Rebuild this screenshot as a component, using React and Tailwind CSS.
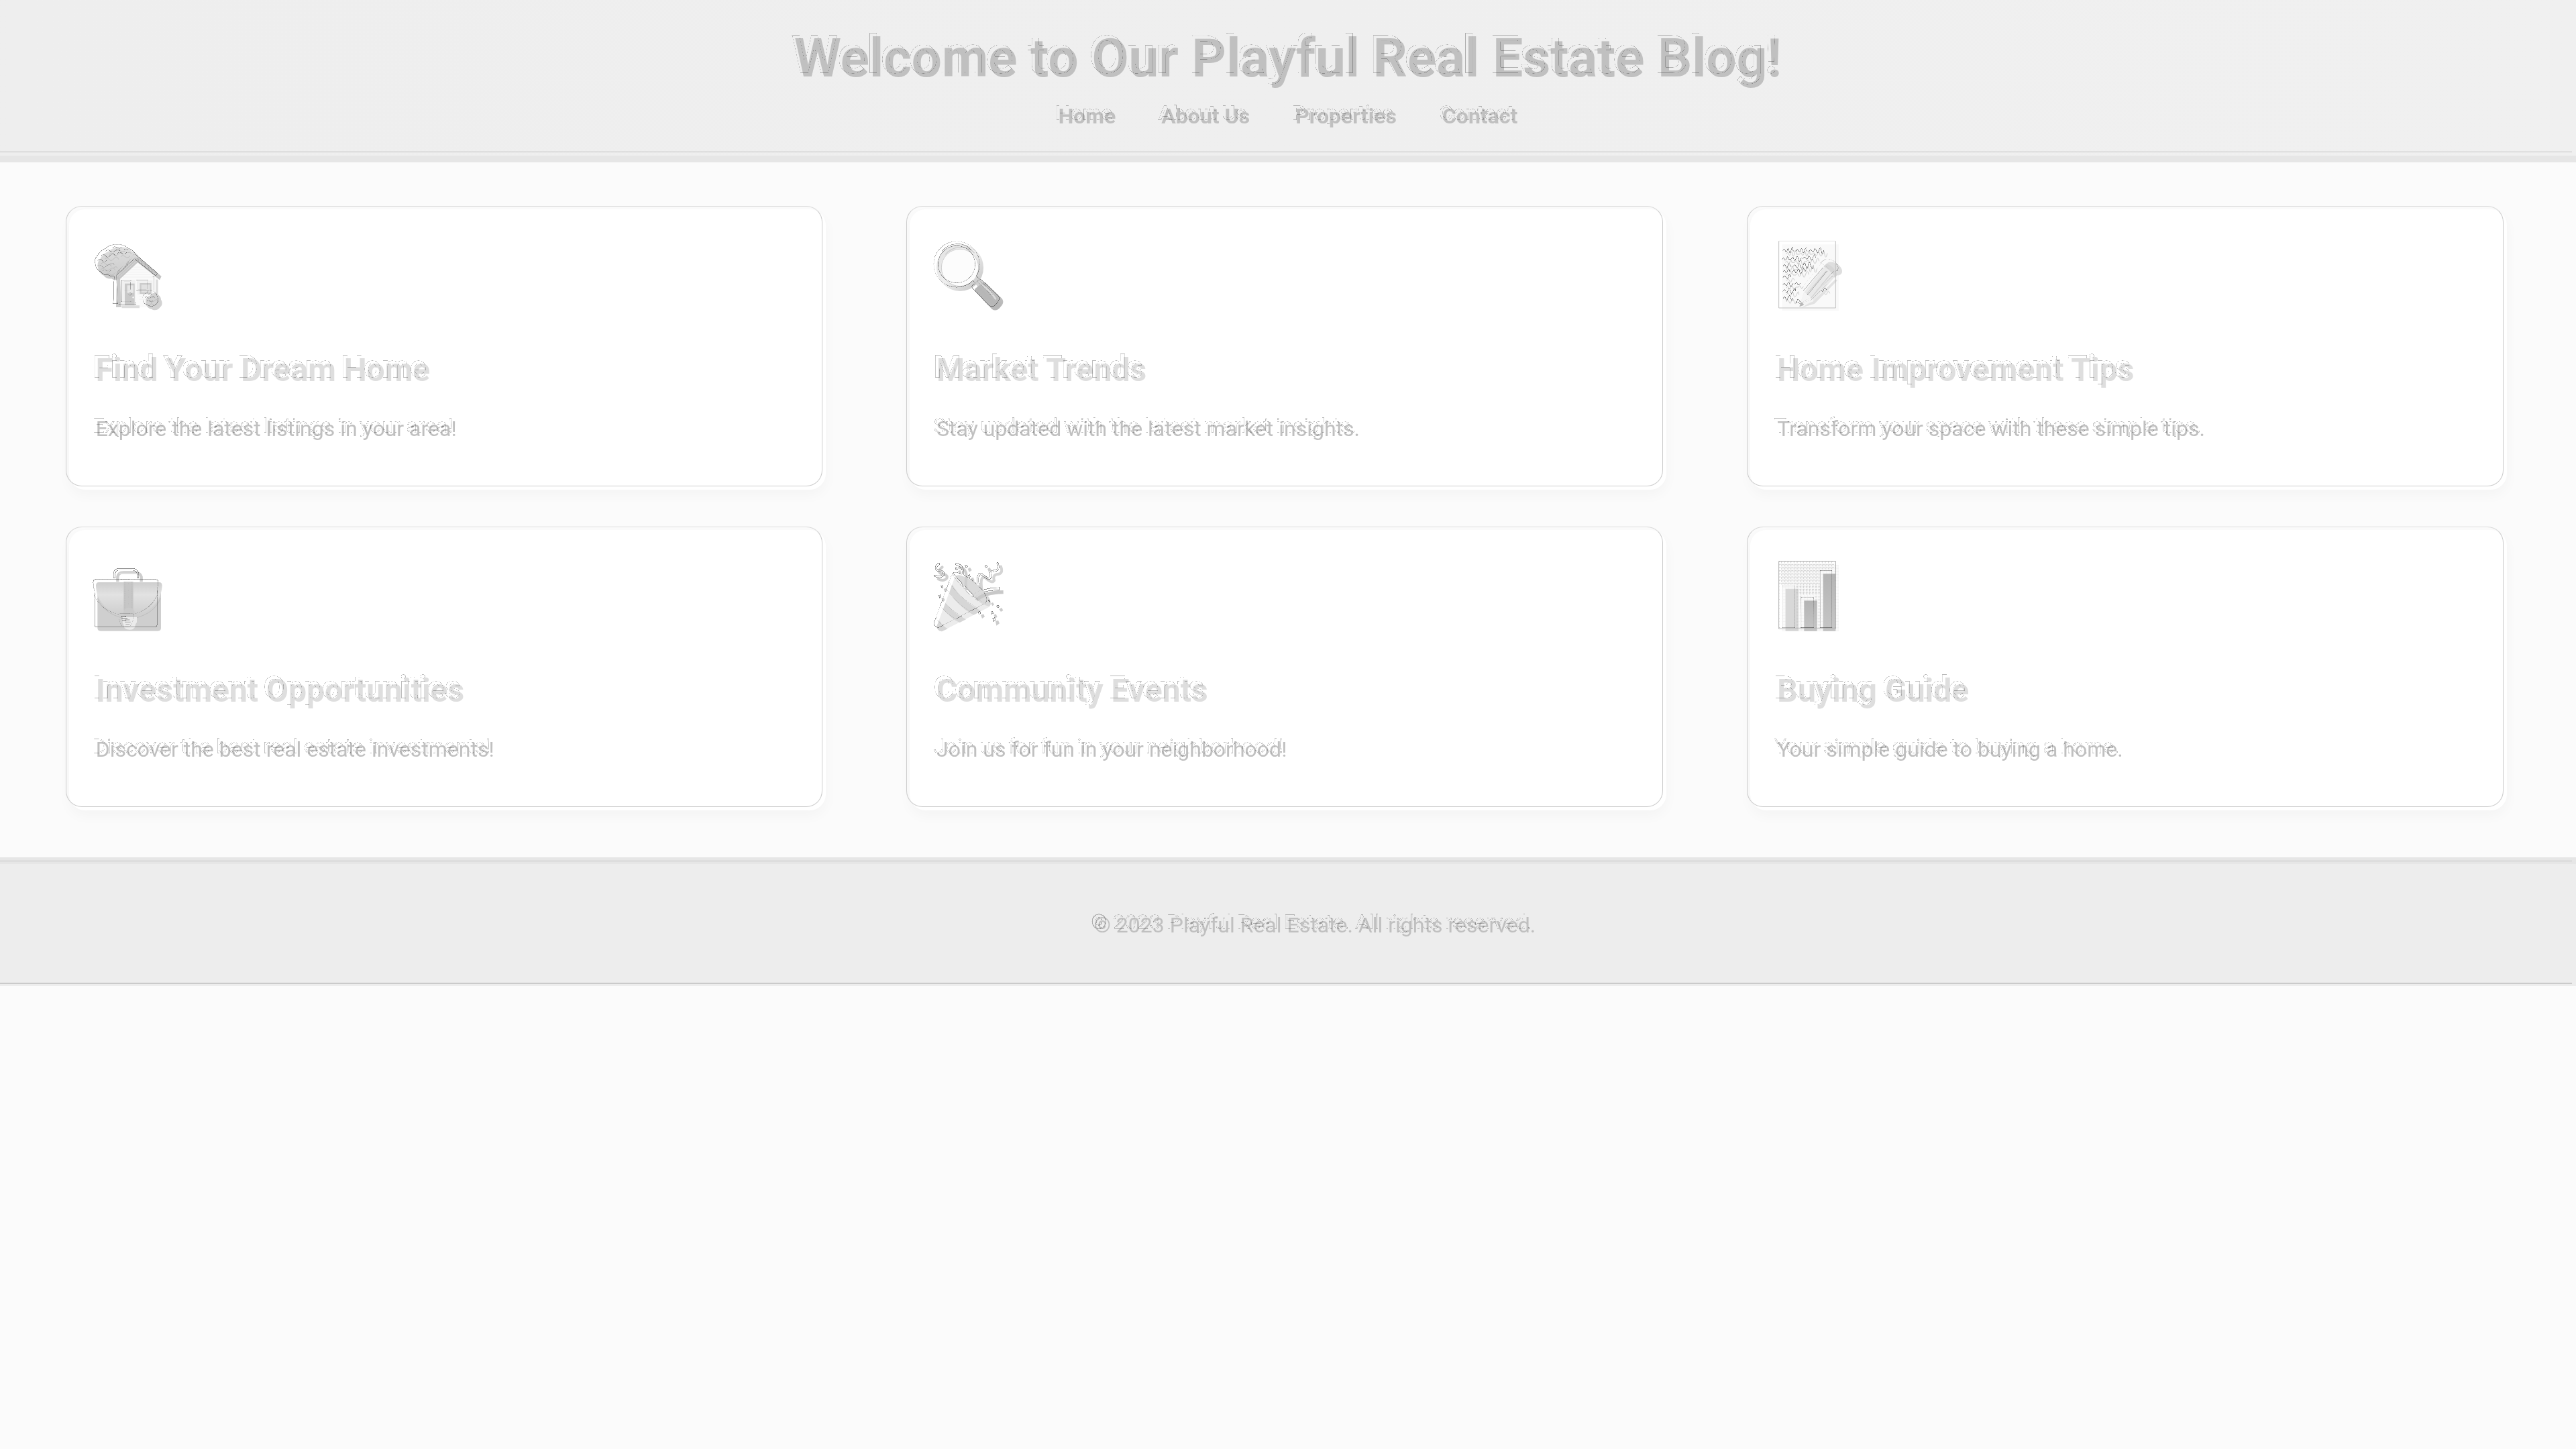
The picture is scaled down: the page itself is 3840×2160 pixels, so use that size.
const links = ["Home", "About Us", "Properties", "Contact"];

// Filters that lay a thin etched outline up and to the left of the text and icons.
function EtchFilters() {
  return (
    <svg width="0" height="0" className="absolute" aria-hidden="true">
      <filter id="etch" x="-10%" y="-50%" width="120%" height="200%" colorInterpolationFilters="sRGB">
        <feConvolveMatrix in="SourceAlpha" order="3" kernelMatrix="0 -1 0 -1 4 -1 0 -1 0" divisor="1" preserveAlpha="false" result="edge" />
        <feComponentTransfer in="edge" result="thin">
          <feFuncA type="linear" slope="1" intercept="-0.68" />
        </feComponentTransfer>
        <feOffset in="thin" dx="-5" dy="-5" result="moved" />
        <feFlood floodColor="#202020" />
        <feComposite in2="moved" operator="in" result="line" />
        <feMerge>
          <feMergeNode in="SourceGraphic" />
          <feMergeNode in="line" />
        </feMerge>
      </filter>
      <filter id="etch-icon" x="-10%" y="-10%" width="120%" height="120%" colorInterpolationFilters="sRGB">
        <feColorMatrix in="SourceGraphic" type="matrix" values="0 0 0 0 0  0 0 0 0 0  0 0 0 0 0  -1.2 -2.36 -0.44 4 0" result="dark" />
        <feConvolveMatrix in="dark" order="3" kernelMatrix="0 -1 0 -1 4 -1 0 -1 0" divisor="1" preserveAlpha="false" result="edge" />
        <feComponentTransfer in="edge" result="thin">
          <feFuncA type="linear" slope="0.9" intercept="-0.22" />
        </feComponentTransfer>
        <feOffset in="thin" dx="-5" dy="-5" result="moved" />
        <feFlood floodColor="#404040" />
        <feComposite in2="moved" operator="in" result="line" />
        <feMerge>
          <feMergeNode in="SourceGraphic" />
          <feMergeNode in="line" />
        </feMerge>
      </filter>
    </svg>
  );
}

function Icon({ viewBox, children }) {
  return (
    <svg viewBox={viewBox} className="size-[100px] overflow-visible [filter:url(#etch-icon)]" aria-hidden="true">
      {children}
    </svg>
  );
}

function HouseIcon() {
  return (
    <Icon viewBox="39 72 300 300">
      <defs>
        <linearGradient id="tree" x1="0" y1="0" x2="0" y2="1">
          <stop offset="0" stopColor="#dedede" />
          <stop offset="1" stopColor="#cacaca" />
        </linearGradient>
      </defs>
      <path d="M48 170c-4-14 4-26 12-34 6-18 22-26 36-32 14-14 34-20 52-18 20-2 40 6 52 18 16 4 28 16 36 30l-8 20-90 76c-14 4-22 2-30-4-14 2-28-4-34-14-14-6-26-22-26-42z" fill="url(#tree)" />
      <path d="M62 160q10-12 20 0t22-2M78 138q12-10 20 2t22-4 20 4M98 118q12-10 20 0t22-2 22 2M60 186q12-10 20 0t22-2 22 2M84 206q10-10 18 0t20-4M128 102q10-8 20 0t22 0M150 128q10-10 20 0t22-4M118 178q10-10 18 0M180 110q10-6 18 4" fill="none" stroke="#bebebe" strokeWidth="3" />
      <path d="M145 215L225 150l88 66v138H148z" fill="#fafafa" />
      <path d="M203 175h46M190 186h72M178 197h96M168 208h116M160 219h136M232 305h78M232 318h78" stroke="#eeeeee" strokeWidth="2" />
      <path d="M133 224h14l6 130h-24z" fill="#cbcbcb" />
      <path d="M307 230h10v80h-10z" fill="#dcdcdc" />
      <path d="M222 132l12 0 98 84-8 16-98-78-82 76-14-6z" fill="#c4c4c4" />
      <path d="M228 144l92 74M222 146l-80 74" stroke="#dadada" strokeWidth="3" />
      <path d="M155 232h60v114h-60zM224 234h68v64h-68z" fill="#f1f1f1" />
      <path d="M168 248h44v98h-44z" fill="#c9c9c9" />
      <path d="M179 256h28v34h-28z" fill="#e8e8e8" />
      <circle cx="206" cy="310" r="4" fill="#f0f0f0" />
      <path d="M235 246h52v48h-52z" fill="#cbcbcb" />
      <path d="M242 253h39v35h-39z" fill="#e1e1e1" />
      <path d="M156 346h78v12h-80z" fill="#dddddd" />
      <path d="M262 330c-2-16 8-24 18-26 6-12 22-18 32-8 12 4 18 14 18 24 8 12 6 26-4 34-8 14-28 16-38 8-14 0-26-14-26-32z" fill="#d2d2d2" />
      <path d="M272 326q8-8 14 0t16-2 14 4M280 342q8-8 14 0t16-2M288 312q8-8 16 0" fill="none" stroke="#bcbcbc" strokeWidth="3" />
    </Icon>
  );
}

function MagnifierIcon() {
  return (
    <Icon viewBox="48 72 300 300">
      <defs>
        <linearGradient id="rim" x1="0" y1="0" x2="1" y2="1">
          <stop offset="0" stopColor="#e2e2e2" />
          <stop offset="0.5" stopColor="#efefef" />
          <stop offset="1" stopColor="#c2c2c2" />
        </linearGradient>
        <linearGradient id="grip" x1="0" y1="1" x2="1" y2="0">
          <stop offset="0" stopColor="#bcbcbc" />
          <stop offset="0.5" stopColor="#b6b6b6" />
          <stop offset="1" stopColor="#cccccc" />
        </linearGradient>
      </defs>
      <path d="M222 250l22-22 22 20-24 24z" fill="#d2d2d2" />
      <circle cx="153" cy="177" r="94" fill="#fcfcfc" stroke="url(#rim)" strokeWidth="22" />
      <circle cx="153" cy="177" r="83" fill="none" stroke="#d0d0d0" strokeWidth="3" />
      <path d="M88 118c30-38 94-46 130-6" fill="none" stroke="#cccccc" strokeWidth="4" />
      <path d="M220 282q-4-6 2-12l30-24q8-6 16 0l72 68q12 14 0 32l-12 14q-16 14-32 2z" fill="url(#grip)" />
      <path d="M250 254q40 26 62 62" fill="none" stroke="#dadada" strokeWidth="8" strokeLinecap="round" />
    </Icon>
  );
}

function MemoIcon() {
  return (
    <div className="relative size-[100px]">
      <Icon viewBox="42 72 300 300">
        <rect x="65" y="73" width="253" height="297" fill="#f9f9f9" />
        <path
          d="M84 116q6-14 10 0t9-3 8 4 10-6 8 6h14q6-12 10 0t10-4 8 4 10-4 8 4h12q6-12 12 0t10-4 10 4 12-4 10 4 12-4M80 154q6-12 10 0t10-4 8 4h12q8-16 12 0t10-4 10 4 12-4h10q6-12 12 0t10-4 10 4 12-4 12 2M84 186q8-16 12 0t10-4 10 4h14q6-12 12 0t10-4 10 4 12-4 12 2 10-2 12 2 12-2M84 210q6-12 10 0t10-4 10 4h12q8-14 12 0t10-4 10 4 12-4 14 2M84 236q8-14 14 0t10-4 12 2M84 268q6-12 10 0t10-4 10 4 12-4h12q6-12 10 0t12-2M84 298q8-14 12 0t10-4 10 4 14-2 10 2M246 294q6-12 10 0t10-4 12 2M84 330q8-16 12 0t10-4 12 2 10-2"
          fill="none"
          stroke="#cccccc"
          strokeWidth="3"
        />
        <path d="M150 356l60-18 102-104-8-6-96 94z" fill="#e2e2e2" />
        <path d="M142 352l20-64 90-114q30 8 48 44l-96 110z" fill="#e9e9e9" />
        <path d="M262 192l-88 104M282 206l-92 112" stroke="#d4d4d4" strokeWidth="4" />
        <path d="M142 352l20-64q12 0 16 12 14 2 14 14 14 2 12 14z" fill="#f4f4f4" />
        <path d="M142 352l6-20q12 2 14 12z" fill="#b8b8b8" />
        <path d="M250 172l14-14q36 10 50 50l-14 14q-14-34-50-50z" fill="#d6d6d6" />
        <path d="M264 158q12-10 32-4 28 10 36 32 4 14-6 22l-12 4q-16-40-50-54z" fill="#dedede" />
      </Icon>
      <svg viewBox="42 72 300 300" className="absolute left-0 top-0 size-[100px] overflow-visible" aria-hidden="true">
        <path d="M50 58h254" stroke="#e4e4e4" strokeWidth="3" />
        <path d="M50 58v299h254V58" fill="none" stroke="#c0c0c0" strokeWidth="3" />
      </svg>
    </div>
  );
}

function BriefcaseIcon() {
  return (
    <Icon viewBox="39 66 300 300">
      <defs>
        <linearGradient id="flap" x1="0" y1="0" x2="0" y2="1">
          <stop offset="0" stopColor="#cecece" />
          <stop offset="0.35" stopColor="#e2e2e2" />
          <stop offset="1" stopColor="#cbcbcb" />
        </linearGradient>
      </defs>
      <path d="M136 142v-22q2-20 26-20h52q24 2 28 20v22" fill="none" stroke="#cdcdcd" strokeWidth="13" />
      <path d="M142 104h92" stroke="#dedede" strokeWidth="6" />
      <path d="M46 160h284v188q0 14-14 14H60q-14 0-14-14z" fill="#cfcfcf" />
      <path d="M52 144h270q13 0 13 16-4 68-60 108-44 34-88 34t-88-34q-58-40-60-108 0-16 13-16z" fill="url(#flap)" />
      <path d="M46 216q16 40 54 64 44 26 87 26t87-26q38-24 54-64" fill="none" stroke="#bebebe" strokeWidth="3" />
      <path d="M163 142h43v128h-43z" fill="#c6c6c6" />
      <path d="M168 142v122M200 142v122" stroke="#b6b6b6" strokeWidth="2" strokeDasharray="6 4" />
      <circle cx="187" cy="282" r="25" fill="#cacaca" />
      <path d="M158 300h64v24q-6 4-8 18-6 16-26 14-20 0-24-14-2-14-6-18z" fill="#ebebeb" />
      <path d="M168 312h22M168 322h26M172 332h18" stroke="#b6b6b6" strokeWidth="4" />
    </Icon>
  );
}

function PopperIcon() {
  return (
    <Icon viewBox="48 66 300 300">
      <path d="M132 118q10-10 28-4 60 20 110 78 26 36 20 52-6 16-34 6z" fill="#dadada" />
      <path d="M132 116l-82 222q-4 20 22 26l216-112q-46-6-96-62-40-44-60-74z" fill="#ececec" />
      <path d="M118 154l-12 36q54 74 108 100l34-18q-86-44-130-118zM88 236l-10 28q38 46 74 60l28-14q-54-28-92-74zM60 314l-10 24q-4 20 22 26l26-12q-24-14-38-38z" fill="#d6d6d6" />
      <path d="M74 76q-24 18-6 30 34 4 26 20-14 16-38 4" fill="none" stroke="#d0d0d0" strokeWidth="12" strokeLinecap="round" />
      <path d="M150 78q32 2 32 44-6 30 0 52" fill="none" stroke="#cecece" strokeWidth="12" strokeLinecap="round" />
      <path d="M250 172q-8-60 16-48 32 28 40 12-8-24 14-28 28-2 16-34" fill="none" stroke="#d4d4d4" strokeWidth="12" strokeLinecap="round" />
      <path d="M228 224q30-34 119-36" fill="none" stroke="#c8c8c8" strokeWidth="16" />
      <path d="M188 84l10-6 8 12-12 8zM202 126l10-4 6 14-10 4zM276 84l10-6 8 12-12 8zM70 216l10-4 6 12-10 8zM328 264l12-6 6 12-10 6zM246 290l12-4 6 12-12 8zM304 290l10-4 6 14-10 4zM312 318l12-4 6 14-14 10zM144 94l10-4 6 12-10 6zM80 174l10-4 6 12-10 6zM292 238l8-4 6 10-8 6z" fill="#cccccc" />
    </Icon>
  );
}

function ChartIcon() {
  return (
    <div className="relative size-[100px]">
      <Icon viewBox="42 66 300 300">
        <defs>
          <pattern id="grid" x="65" y="66" width="14" height="14" patternUnits="userSpaceOnUse">
            <path d="M0 0h14M0 0v14" stroke="#ececec" strokeWidth="3" />
          </pattern>
          <linearGradient id="bar" x1="0" y1="0" x2="0" y2="1">
            <stop offset="0" stopColor="#b4b4b4" />
            <stop offset="1" stopColor="#c6c6c6" />
          </linearGradient>
        </defs>
        <rect x="65" y="66" width="253" height="297" fill="#fafafa" />
        <rect x="65" y="66" width="253" height="297" fill="url(#grid)" />
        <path d="M80 173h58v190H80z" fill="#d8d8d8" />
        <path d="M163 226h58v137h-58z" fill="url(#bar)" />
        <path d="M248 106h56v257h-56z" fill="url(#bar)" />
      </Icon>
      <svg viewBox="42 66 300 300" className="absolute left-0 top-0 size-[100px] overflow-visible" aria-hidden="true">
        <path
          d="M62 50v104M76 50v104M90 50v104M104 50v104M118 50v104M132 50v300M146 50v160M160 50v152M174 50v152M188 50v152M202 50v152M216 50v300M230 50v300M244 50v36M258 50v36M272 50v36M286 50v36M50 64h254M50 78h254M50 92h184M50 106h184M50 120h184M50 134h184M50 148h184M128 162h106M128 176h106M128 190h106"
          stroke="#bcbcbc"
          strokeWidth="2"
          strokeDasharray="9 5"
        />
        <path d="M50 50h254v302" fill="none" stroke="#aaaaaa" strokeWidth="3" />
        <path d="M50 50v302h254" fill="none" stroke="#b0b0b0" strokeWidth="3" />
      </svg>
    </div>
  );
}

const cards = [
  { Picture: HouseIcon, title: "Find Your Dream Home", text: "Explore the latest listings in your area!" },
  { Picture: MagnifierIcon, title: "Market Trends", text: "Stay updated with the latest market insights." },
  { Picture: MemoIcon, title: "Home Improvement Tips", text: "Transform your space with these simple tips." },
  { Picture: BriefcaseIcon, title: "Investment Opportunities", text: "Discover the best real estate investments!" },
  { Picture: PopperIcon, title: "Community Events", text: "Join us for fun in your neighborhood!" },
  { Picture: ChartIcon, title: "Buying Guide", text: "Your simple guide to buying a home." },
];

function Card({ Picture, title, text }) {
  return (
    <article className="relative my-[30px] w-[30%] rounded-3xl bg-white p-10 shadow-[0_8px_20px_rgba(0,0,0,0.03)] before:pointer-events-none before:absolute before:-left-[5px] before:-top-[5px] before:size-full before:rounded-3xl before:border before:border-[#cccccc] before:border-t-[#dadada]">
      <div className="pb-5 pt-3">
        <Picture />
      </div>
      <h2 className="my-10 text-[48px] font-bold leading-[56px] text-[#dedede] [filter:url(#etch)]">{title}</h2>
      <p className="mb-8 text-[32px] leading-[38px] text-[#c0c0c0] [filter:url(#etch)]">{text}</p>
    </article>
  );
}

export default function App() {
  return (
    <div className="min-h-screen bg-[#fbfbfb] font-['Roboto',sans-serif]">
      <EtchFilters />
      <header className="relative border-b-[10px] border-[#e6e6e6] bg-linear-to-r from-[#eeeeee] to-[#f0f0f0] p-10 text-center text-[#c0c0c0] before:absolute before:bottom-[5px] before:left-0 before:right-[6px] before:h-px before:bg-[#c0c0c0]">
        <h1 className="text-[80px] font-bold leading-[94px] [filter:url(#etch)]">Welcome to Our Playful Real Estate Blog!</h1>
        <nav className="mt-5 flex justify-center gap-[68px] text-[32px] font-bold leading-[38px] [filter:url(#etch)]">
          {links.map((l) => (
            <a key={l} href="#">{l}</a>
          ))}
        </nav>
      </header>
      <main className="flex flex-wrap justify-around p-10">
        {cards.map((c) => (
          <Card key={c.title} {...c} />
        ))}
      </main>
      <footer className="relative border-t-[10px] border-[#e6e6e6] bg-[#ededed] py-[72px] pl-20 text-center text-[32px] leading-[38px] text-[#c0c0c0] before:absolute before:-top-[5px] before:left-0 before:right-[6px] before:h-px before:bg-[#c4c4c4] after:absolute after:bottom-1 after:left-0 after:right-[6px] after:h-px after:bg-[#999999]">
        <p className="[filter:url(#etch)]">© 2023 Playful Real Estate. All rights reserved.</p>
      </footer>
    </div>
  );
}
